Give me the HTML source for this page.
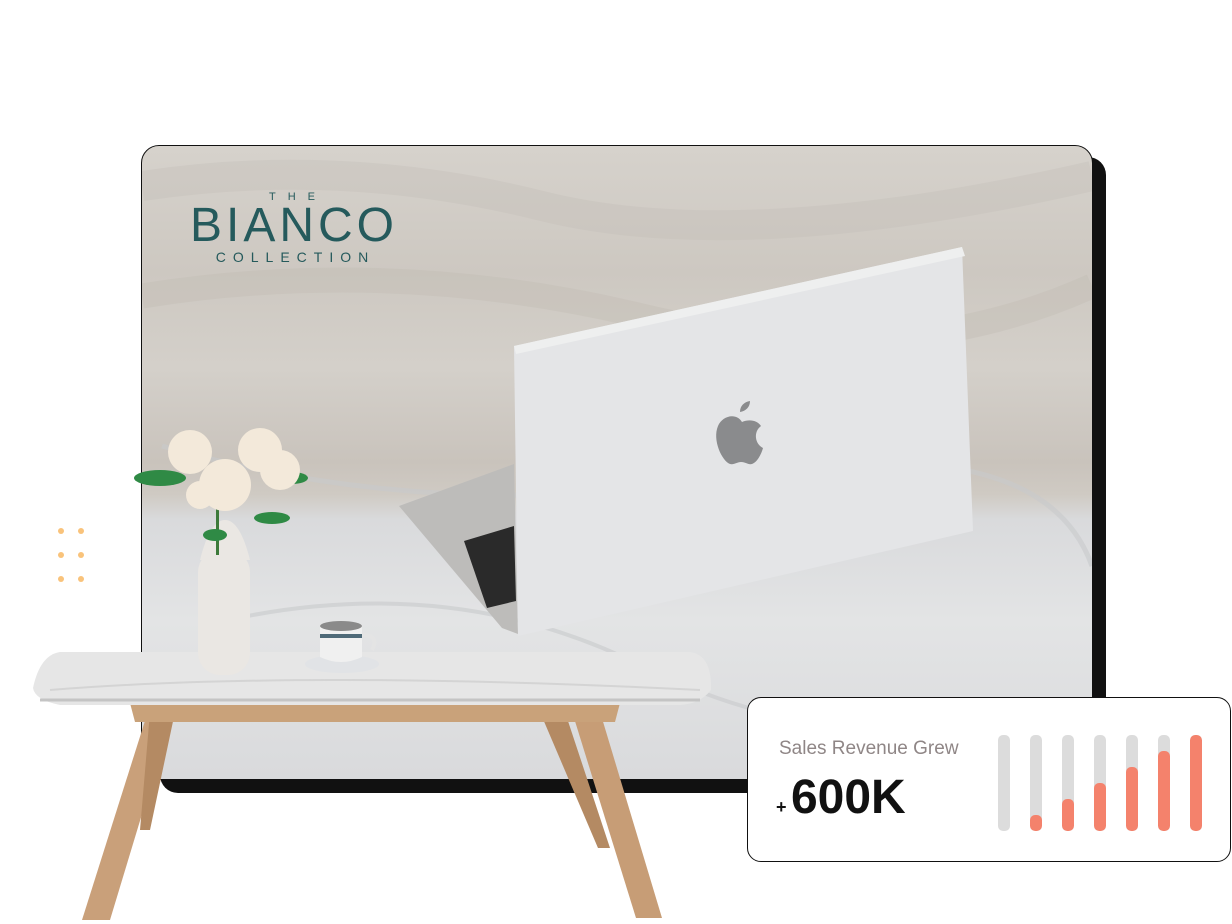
<!DOCTYPE html>
<html><head><meta charset="utf-8"><style>
body{margin:0;width:1232px;height:924px;background:#fff;position:relative;overflow:hidden;font-family:"Liberation Sans",sans-serif}
.shadow{position:absolute;left:160px;top:157px;width:946px;height:636px;background:#111;border-radius:18px}
.photo{position:absolute;left:141px;top:145px;width:950px;height:633px;border:1.5px solid #111;border-radius:18px;overflow:hidden;
background:linear-gradient(180deg,#d6d2cc 0%,#cdc8c1 20%,#d4d0ca 35%,#c9c3bc 50%,#cfcac3 55%,#d9dadc 59%,#e3e4e5 75%,#d9dadc 100%)}
.card{position:absolute;left:747px;top:697px;width:482px;height:163px;border:1.5px solid #111;border-radius:14px;background:#fff}
.bar{position:absolute;top:37px;width:12px;height:96px;border-radius:5px;background:#dcdcdc;overflow:hidden}
.bar i{position:absolute;left:0;bottom:0;width:12px;background:#f4826c;border-radius:5px}
.dot{position:absolute;width:6px;height:6px;border-radius:50%;background:#f9c37b}
</style></head><body>
<div class="shadow"></div>
<div class="photo">
<svg width="950" height="633" style="position:absolute;left:0;top:0">
<path d="M0 40 Q200 10 400 60 T950 30" stroke="#c4beb7" stroke-width="30" fill="none" opacity=".35"/>
<path d="M0 150 Q250 110 500 170 T950 140" stroke="#c1bbb3" stroke-width="25" fill="none" opacity=".35"/>
<path d="M20 300 Q300 380 600 330 T950 420" stroke="#c8cacc" stroke-width="5" fill="none" opacity=".6"/>
<path d="M60 480 Q300 420 500 520 T900 560" stroke="#c8cacc" stroke-width="4" fill="none" opacity=".6"/>
<polygon points="257,360 372,318 376,488 360,482" fill="#bdbcba"/>
<polygon points="322,395 372,380 374,455 345,462" fill="#2a2a2a"/>
<polygon points="372,200 820,101 831,385 376,490" fill="#e4e5e7"/>
<polygon points="372,200 820,101 823,110 374,208" fill="#eeefef"/>
<path d="M600 276 c-6-10-20-6-24 4 c-6 14 4 35 12 38 c4 1 7-2 11-2 c5 0 7 3 11 2 c6-2 10-12 11-16 c-8-4-10-16-2-22 c-4-6-12-7-19-4z M598 266 c0-6 4-10 10-11 c0 6-4 10-10 11z" fill="#8a8b8d"/>
</svg>
<div style="position:absolute;left:40px;top:45px;width:220px;text-align:center;color:#255a5c">
<div style="font-size:11px;letter-spacing:12px;margin-left:12px">THE</div>
<div style="font-size:48px;letter-spacing:4px;line-height:46px;margin-left:4px">BIANCO</div>
<div style="font-size:14px;letter-spacing:7px;margin-left:7px">COLLECTION</div>
</div>
</div>
<div class="dot" style="left:58px;top:528px"></div><div class="dot" style="left:78px;top:528px"></div>
<div class="dot" style="left:58px;top:552px"></div><div class="dot" style="left:78px;top:552px"></div>
<div class="dot" style="left:58px;top:576px"></div><div class="dot" style="left:78px;top:576px"></div>
<svg width="1232" height="924" style="position:absolute;left:0;top:0">
<polygon points="150,705 175,705 110,920 82,920" fill="#c9a07a"/>
<polygon points="570,705 598,705 662,918 636,918" fill="#c79d76"/>
<polygon points="150,712 175,712 150,830 140,830" fill="#b48a63"/>
<polygon points="540,712 565,712 610,848 598,848" fill="#b48a63"/>
<polygon points="130,703 620,703 615,722 135,722" fill="#c9a27a"/>
<path d="M60 652 L690 652 Q712 655 711 690 Q700 704 680 705 L60 705 Q35 700 33 688 Q40 655 60 652z" fill="#e6e6e6"/>
<path d="M50 690 Q300 670 700 690" stroke="#d4d4d4" stroke-width="2" fill="none"/>
<path d="M40 700 L700 700" stroke="#c4c4c4" stroke-width="3"/>
<rect x="198" y="550" width="52" height="125" rx="22" fill="#eae7e3"/>
<path d="M200 560 q10-40 25-40 q15 0 25 40" fill="#eae7e3"/>
<rect x="216" y="500" width="3" height="55" fill="#3d7a3a"/>
<g fill="#2f8a45"><ellipse cx="160" cy="478" rx="26" ry="8"/><ellipse cx="272" cy="518" rx="18" ry="6"/><ellipse cx="292" cy="478" rx="16" ry="6"/><ellipse cx="215" cy="535" rx="12" ry="6"/></g>
<g fill="#f3e9da"><circle cx="190" cy="452" r="22"/><circle cx="225" cy="485" r="26"/><circle cx="260" cy="450" r="22"/><circle cx="280" cy="470" r="20"/><circle cx="200" cy="495" r="14"/></g>
<ellipse cx="342" cy="664" rx="37" ry="9" fill="#e1e3e6"/>
<path d="M320 625 h42 v32 q-21 10 -42 0z" fill="#f0f0f0"/>
<ellipse cx="341" cy="626" rx="21" ry="5" fill="#8a8a8a"/>
<rect x="320" y="634" width="42" height="4" fill="#4f6a78"/>
<path d="M362 635 q18 0 10 15" stroke="#e4e4e4" stroke-width="4" fill="none"/>
</svg>
<div class="card">
<div style="position:absolute;left:31px;top:40px;font-size:19px;color:#8f8686">Sales Revenue Grew</div>
<div style="position:absolute;left:28px;top:72px;color:#111;font-weight:bold"><span style="font-size:18px">+</span> <span style="font-size:48px">600K</span></div>
<div class="bar" style="left:250px"></div>
<div class="bar" style="left:282px"><i style="height:16px"></i></div>
<div class="bar" style="left:314px"><i style="height:32px"></i></div>
<div class="bar" style="left:346px"><i style="height:48px"></i></div>
<div class="bar" style="left:378px"><i style="height:64px"></i></div>
<div class="bar" style="left:410px"><i style="height:80px"></i></div>
<div class="bar" style="left:442px"><i style="height:96px"></i></div>
</div>
</body></html>
